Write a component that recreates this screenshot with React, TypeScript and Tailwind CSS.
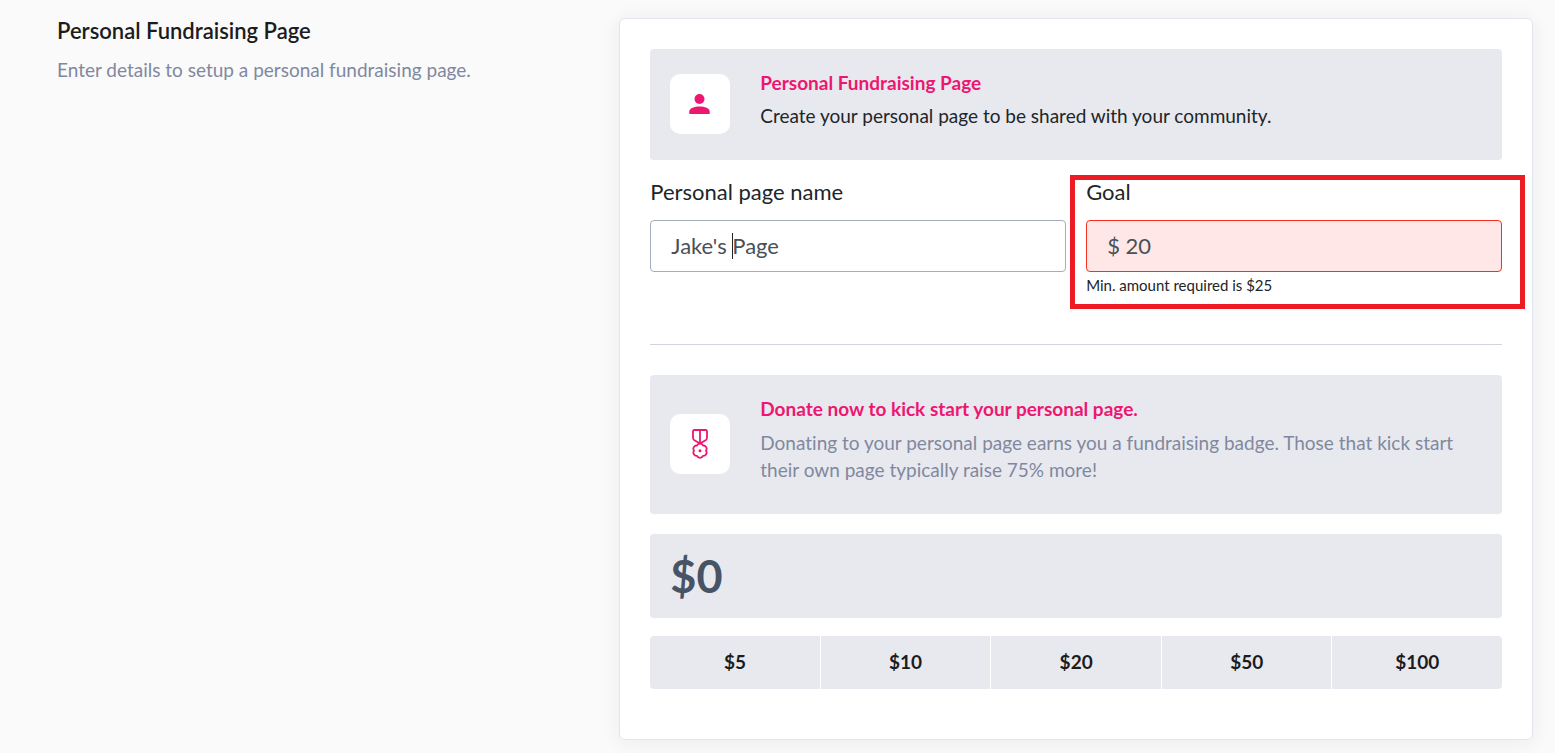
import React, { useState } from 'react'

interface NoticeProps {
    icon: React.ReactNode
    title: string
    children: React.ReactNode
}

const PersonIcon: React.FC = () => (
    <svg viewBox="0 0 22 20" className="h-5 w-[22px] fill-current" aria-hidden="true">
        <circle cx="10.500" cy="5" r="5" />
        <path d="M0.300 20v-2.400c0-3.400 5.200-5 10.200-5s10.200 1.600 10.200 5V20z" />
    </svg>
)

const MedalIcon: React.FC = () => (
    <svg viewBox="0 0 16 30" className="h-[30px] w-4" fill="none" stroke="currentColor" strokeWidth="1.800" strokeLinecap="round" strokeLinejoin="round" aria-hidden="true">
        <path d="M2.400 1h11.200c.9 0 1.400.5 1.400 1.400v6.200c0 1-.3 1.700-1 2.300L8 14.600 2 10.900C1.300 10.300 1 9.600 1 8.600V2.400C1 1.500 1.500 1 2.400 1z" />
        <path d="M8 1v13" />
        <path d="M11 16.500A3.300 3.300 0 0 1 14 21.700A3.300 3.300 0 0 1 11 26.900A3.300 3.300 0 0 1 5 26.900A3.300 3.300 0 0 1 2 21.700A3.300 3.300 0 0 1 5 16.500A3.300 3.300 0 0 1 11 16.500z" />
        <circle cx="8" cy="21.700" r="1.500" fill="currentColor" stroke="none" />
    </svg>
)

const Notice: React.FC<NoticeProps> = ({ icon, title, children }) => {
    return (
        <div className="flex items-center rounded bg-[#e8e9ee] p-5">
            <div className="mb-px flex size-15 shrink-0 items-center justify-center rounded-[10px] bg-white text-[#ed1771]">
                {icon}
            </div>
            <div className="ml-[30px] pb-[11px]">
                <h3 className="text-[19px] leading-7 font-bold text-[#ed1771]">{title}</h3>
                {children}
            </div>
        </div>
    )
}

const amounts = [5, 10, 20, 50, 100]

const App: React.FC = () => {
    const [name, setName] = useState("Jake's Page")
    const [goal, setGoal] = useState('$ 20')
    const [donation, setDonation] = useState(0)

    return (
        <div className="grid min-h-screen grid-cols-[8fr_13fr] items-start bg-[#fafafa] pt-[18px] pr-[22px] pb-[13px] pl-[57px] font-['Lato',sans-serif] text-[#212529] [font-variant-ligatures:none]">
            {/* ::Section intro */}
            <div>
                <h2 className="text-[22px] leading-[26px] font-semibold text-[#1b1c20]">Personal Fundraising Page</h2>
                <p className="mt-3 text-[19px] leading-7 text-[#8088a0]">Enter details to setup a personal fundraising page.</p>
            </div>

            {/* ::Card */}
            <form onSubmit={(e) => e.preventDefault()} className="rounded-md border border-[#e2e5ec] bg-white px-[30px] pt-[30px] pb-[50px] shadow-[0_2px_20px_rgba(30,40,70,0.07)]">
                <Notice icon={<PersonIcon />} title="Personal Fundraising Page">
                    <p className="mt-[5px] text-[19px] leading-[27px] text-[#212529]">Create your personal page to be shared with your community.</p>
                </Notice>

                {/* :::Fields */}
                <div className="mt-[18px] grid grid-cols-2 gap-5">
                    <div>
                        <label htmlFor="page-name" className="block text-[22px] leading-7">Personal page name</label>
                        <div className="relative mt-3.5">
                            <input
                                id="page-name"
                                value={name}
                                onChange={(e) => setName(e.target.value)}
                                className="block h-13 w-full rounded border border-[#a5adbd] bg-white px-5 pb-0.5 text-[22px] text-[#495057] outline-none"
                            />
                            <span className="pointer-events-none absolute top-[13px] left-[82px] h-[26px] w-px bg-[#212529]" />
                        </div>
                    </div>
                    <div className="relative">
                        <label htmlFor="goal" className="block text-[22px] leading-7">Goal</label>
                        <input
                            id="goal"
                            value={goal}
                            onChange={(e) => setGoal(e.target.value)}
                            aria-invalid="true"
                            aria-describedby="goal-help"
                            className="mt-3.5 block h-13 w-full rounded border border-[#f5301e] bg-[#fee7e6] px-5 pb-0.5 text-[22px] text-[#495057] outline-none"
                        />
                        <p id="goal-help" className="mt-px text-[15px] leading-6">Min. amount required is $25</p>
                        <div className="pointer-events-none absolute -top-[3px] -right-[23px] -bottom-3 -left-4 border-5 border-[#ed1c24]" />
                    </div>
                </div>

                <hr className="mt-[47px] mb-[30px] border-[#d1d5db]" />

                <Notice icon={<MedalIcon />} title="Donate now to kick start your personal page.">
                    <p className="mt-1.5 text-[19px] leading-[27px] text-[#8088a0]">
                        Donating to your personal page earns you a fundraising badge. Those that kick start their own page typically raise 75% more!
                    </p>
                </Notice>

                {/* :::Donation amount */}
                <output className="mt-5 block rounded bg-[#e8e9ee] px-5 py-3 text-[45px] leading-15 font-bold text-[#495366]">${donation}</output>
                <div className="mt-[18px] grid grid-cols-5 gap-px overflow-hidden rounded">
                    {amounts.map((amount) => (
                        <button
                            key={amount}
                            type="button"
                            onClick={() => setDonation(amount)}
                            className="h-[53px] cursor-pointer bg-[#e8e9ee] text-[19px] font-bold text-[#1b1c20]"
                        >
                            ${amount}
                        </button>
                    ))}
                </div>
            </form>
        </div>
    )
}

export default App
